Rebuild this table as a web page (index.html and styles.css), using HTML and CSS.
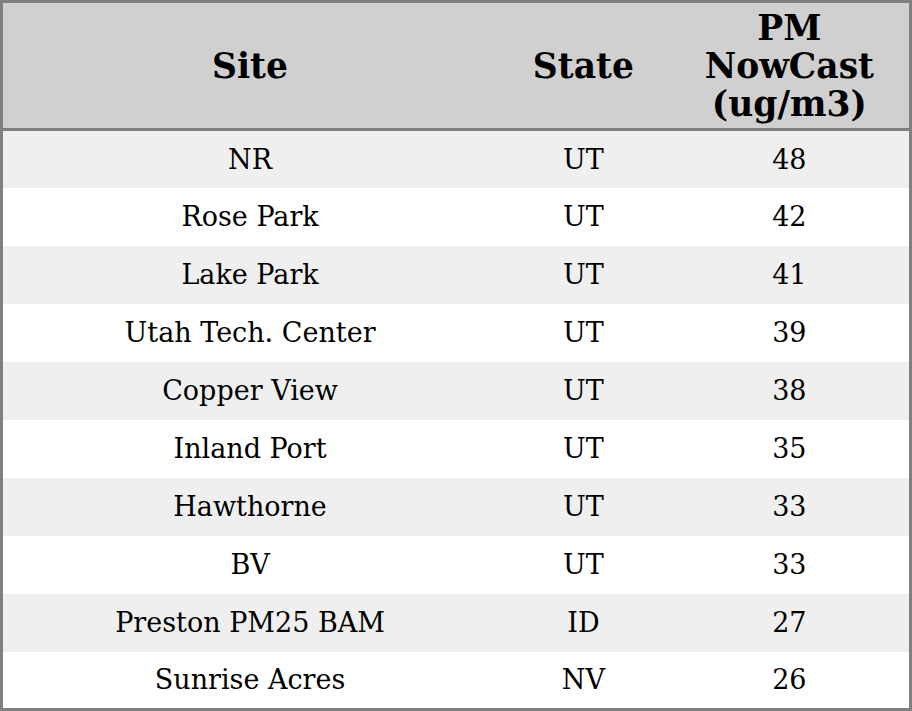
FILE: index.html
```html
<!DOCTYPE html>
<html>
<head>
<meta charset="utf-8">
<link rel="stylesheet" href="styles.css">
</head>
<body>
<table class="aq-table">
  <colgroup>
    <col class="col-site">
    <col class="col-state">
    <col class="col-pm">
  </colgroup>
  <thead>
    <tr class="head-row">
      <th>Site</th>
      <th>State</th>
      <th>PM<br>NowCast<br>(ug/m3)</th>
    </tr>
  </thead>
  <tbody>
    <tr><td>NR</td><td>UT</td><td>48</td></tr>
    <tr><td>Rose Park</td><td>UT</td><td>42</td></tr>
    <tr><td>Lake Park</td><td>UT</td><td>41</td></tr>
    <tr><td>Utah Tech. Center</td><td>UT</td><td>39</td></tr>
    <tr><td>Copper View</td><td>UT</td><td>38</td></tr>
    <tr><td>Inland Port</td><td>UT</td><td>35</td></tr>
    <tr><td>Hawthorne</td><td>UT</td><td>33</td></tr>
    <tr><td>BV</td><td>UT</td><td>33</td></tr>
    <tr><td>Preston PM25 BAM</td><td>ID</td><td>27</td></tr>
    <tr><td>Sunrise Acres</td><td>NV</td><td>26</td></tr>
  </tbody>
</table>
</body>
</html>
```
FILE: styles.css
```css
html, body {
  margin: 0;
  padding: 0;
  background: #ffffff;
}

.aq-table {
  width: 912px;
  border-collapse: collapse;
  border: 3px solid #808080;
  font-family: "DejaVu Serif", serif;
  color: #000;
  table-layout: fixed;
}

.col-site { width: 494px; }
.col-state { width: 172px; }
.col-pm { width: 240px; }

.head-row {
  background: #d0d0d0;
  height: 128px;
}

.head-row th {
  font-size: 34.5px;
  font-weight: bold;
  line-height: 38px;
  text-align: center;
  vertical-align: middle;
  padding: 0;
  border-bottom: 3px solid #808080;
}

.aq-table tbody tr {
  height: 58px;
}

.aq-table tbody tr:nth-child(odd) {
  background: #efefef;
}

.aq-table td {
  font-size: 27px;
  text-align: center;
  vertical-align: middle;
  padding: 0;
}
```
